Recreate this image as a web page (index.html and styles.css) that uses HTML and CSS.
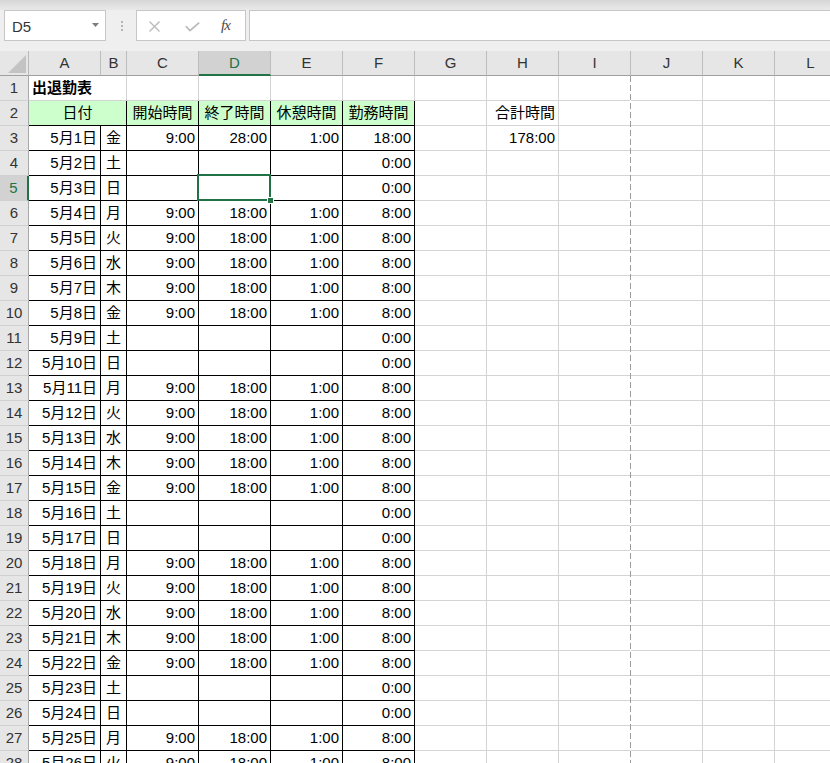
FILE: index.html
```html
<!DOCTYPE html>
<html lang="ja">
<head>
<meta charset="utf-8">
<title>出退勤表</title>
<link rel="stylesheet" href="styles.css">
</head>
<body>
<div class="app">
  <div class="ribbon-shadow"></div>
  <div class="fbar">
    <div class="namebox">
      <span class="nb-text">D5</span>
      <svg class="nb-caret" width="7" height="4" viewBox="0 0 7 4"><polygon points="0,0 7,0 3.5,4" fill="#7d7d7d"/></svg>
    </div>
    <div class="fsep"><i></i><i></i><i></i></div>
    <div class="fbtns">
      <svg class="ic-x" width="11" height="11" viewBox="0 0 11 11"><path d="M0.5 0.5 L10.5 10.5 M10.5 0.5 L0.5 10.5" stroke="#b8b8b8" stroke-width="1.3" fill="none"/></svg>
      <svg class="ic-ok" width="15" height="10" viewBox="0 0 15 10"><path d="M0.8 4.2 L5 8.6 L14.2 0.6" stroke="#b8b8b8" stroke-width="1.6" fill="none"/></svg>
      <span class="ic-fx">fx</span>
    </div>
    <div class="finput"></div>
  </div>
  <div class="sheet">
    <div class="grid">
      <div class="corner"><svg width="18" height="18" viewBox="0 0 18 18"><polygon points="18,0 18,18 0,18" fill="#c3c3c3"/></svg></div>
      <div class="ch">A</div><div class="ch">B</div><div class="ch">C</div><div class="ch sel">D</div><div class="ch">E</div><div class="ch">F</div><div class="ch">G</div><div class="ch">H</div><div class="ch">I</div><div class="ch">J</div><div class="ch">K</div><div class="ch">L</div>

      <div class="rh">1</div><div class="g span2 bold">出退勤表</div><div class="g"></div><div class="g"></div><div class="g"></div><div class="g"></div><div class="g"></div><div class="g"></div><div class="g"></div><div class="g"></div><div class="g"></div><div class="g"></div>

      <div class="rh">2</div><div class="hd span2">日付</div><div class="hd">開始時間</div><div class="hd">終了時間</div><div class="hd">休憩時間</div><div class="hd">勤務時間</div><div class="g"></div><div class="g r">合計時間</div><div class="g"></div><div class="g"></div><div class="g"></div><div class="g"></div>

      <div class="rh">3</div><div class="t r">5月1日</div><div class="t c">金</div><div class="t r">9:00</div><div class="t r">28:00</div><div class="t r">1:00</div><div class="t r">18:00</div><div class="g"></div><div class="g r">178:00</div><div class="g"></div><div class="g"></div><div class="g"></div><div class="g"></div>

      <div class="rh">4</div><div class="t r">5月2日</div><div class="t c">土</div><div class="t"></div><div class="t"></div><div class="t"></div><div class="t r">0:00</div><div class="g"></div><div class="g"></div><div class="g"></div><div class="g"></div><div class="g"></div><div class="g"></div>

      <div class="rh sel">5</div><div class="t r">5月3日</div><div class="t c">日</div><div class="t"></div><div class="t"></div><div class="t"></div><div class="t r">0:00</div><div class="g"></div><div class="g"></div><div class="g"></div><div class="g"></div><div class="g"></div><div class="g"></div>

      <div class="rh">6</div><div class="t r">5月4日</div><div class="t c">月</div><div class="t r">9:00</div><div class="t r">18:00</div><div class="t r">1:00</div><div class="t r">8:00</div><div class="g"></div><div class="g"></div><div class="g"></div><div class="g"></div><div class="g"></div><div class="g"></div>

      <div class="rh">7</div><div class="t r">5月5日</div><div class="t c">火</div><div class="t r">9:00</div><div class="t r">18:00</div><div class="t r">1:00</div><div class="t r">8:00</div><div class="g"></div><div class="g"></div><div class="g"></div><div class="g"></div><div class="g"></div><div class="g"></div>

      <div class="rh">8</div><div class="t r">5月6日</div><div class="t c">水</div><div class="t r">9:00</div><div class="t r">18:00</div><div class="t r">1:00</div><div class="t r">8:00</div><div class="g"></div><div class="g"></div><div class="g"></div><div class="g"></div><div class="g"></div><div class="g"></div>

      <div class="rh">9</div><div class="t r">5月7日</div><div class="t c">木</div><div class="t r">9:00</div><div class="t r">18:00</div><div class="t r">1:00</div><div class="t r">8:00</div><div class="g"></div><div class="g"></div><div class="g"></div><div class="g"></div><div class="g"></div><div class="g"></div>

      <div class="rh">10</div><div class="t r">5月8日</div><div class="t c">金</div><div class="t r">9:00</div><div class="t r">18:00</div><div class="t r">1:00</div><div class="t r">8:00</div><div class="g"></div><div class="g"></div><div class="g"></div><div class="g"></div><div class="g"></div><div class="g"></div>

      <div class="rh">11</div><div class="t r">5月9日</div><div class="t c">土</div><div class="t"></div><div class="t"></div><div class="t"></div><div class="t r">0:00</div><div class="g"></div><div class="g"></div><div class="g"></div><div class="g"></div><div class="g"></div><div class="g"></div>

      <div class="rh">12</div><div class="t r">5月10日</div><div class="t c">日</div><div class="t"></div><div class="t"></div><div class="t"></div><div class="t r">0:00</div><div class="g"></div><div class="g"></div><div class="g"></div><div class="g"></div><div class="g"></div><div class="g"></div>

      <div class="rh">13</div><div class="t r">5月11日</div><div class="t c">月</div><div class="t r">9:00</div><div class="t r">18:00</div><div class="t r">1:00</div><div class="t r">8:00</div><div class="g"></div><div class="g"></div><div class="g"></div><div class="g"></div><div class="g"></div><div class="g"></div>

      <div class="rh">14</div><div class="t r">5月12日</div><div class="t c">火</div><div class="t r">9:00</div><div class="t r">18:00</div><div class="t r">1:00</div><div class="t r">8:00</div><div class="g"></div><div class="g"></div><div class="g"></div><div class="g"></div><div class="g"></div><div class="g"></div>

      <div class="rh">15</div><div class="t r">5月13日</div><div class="t c">水</div><div class="t r">9:00</div><div class="t r">18:00</div><div class="t r">1:00</div><div class="t r">8:00</div><div class="g"></div><div class="g"></div><div class="g"></div><div class="g"></div><div class="g"></div><div class="g"></div>

      <div class="rh">16</div><div class="t r">5月14日</div><div class="t c">木</div><div class="t r">9:00</div><div class="t r">18:00</div><div class="t r">1:00</div><div class="t r">8:00</div><div class="g"></div><div class="g"></div><div class="g"></div><div class="g"></div><div class="g"></div><div class="g"></div>

      <div class="rh">17</div><div class="t r">5月15日</div><div class="t c">金</div><div class="t r">9:00</div><div class="t r">18:00</div><div class="t r">1:00</div><div class="t r">8:00</div><div class="g"></div><div class="g"></div><div class="g"></div><div class="g"></div><div class="g"></div><div class="g"></div>

      <div class="rh">18</div><div class="t r">5月16日</div><div class="t c">土</div><div class="t"></div><div class="t"></div><div class="t"></div><div class="t r">0:00</div><div class="g"></div><div class="g"></div><div class="g"></div><div class="g"></div><div class="g"></div><div class="g"></div>

      <div class="rh">19</div><div class="t r">5月17日</div><div class="t c">日</div><div class="t"></div><div class="t"></div><div class="t"></div><div class="t r">0:00</div><div class="g"></div><div class="g"></div><div class="g"></div><div class="g"></div><div class="g"></div><div class="g"></div>

      <div class="rh">20</div><div class="t r">5月18日</div><div class="t c">月</div><div class="t r">9:00</div><div class="t r">18:00</div><div class="t r">1:00</div><div class="t r">8:00</div><div class="g"></div><div class="g"></div><div class="g"></div><div class="g"></div><div class="g"></div><div class="g"></div>

      <div class="rh">21</div><div class="t r">5月19日</div><div class="t c">火</div><div class="t r">9:00</div><div class="t r">18:00</div><div class="t r">1:00</div><div class="t r">8:00</div><div class="g"></div><div class="g"></div><div class="g"></div><div class="g"></div><div class="g"></div><div class="g"></div>

      <div class="rh">22</div><div class="t r">5月20日</div><div class="t c">水</div><div class="t r">9:00</div><div class="t r">18:00</div><div class="t r">1:00</div><div class="t r">8:00</div><div class="g"></div><div class="g"></div><div class="g"></div><div class="g"></div><div class="g"></div><div class="g"></div>

      <div class="rh">23</div><div class="t r">5月21日</div><div class="t c">木</div><div class="t r">9:00</div><div class="t r">18:00</div><div class="t r">1:00</div><div class="t r">8:00</div><div class="g"></div><div class="g"></div><div class="g"></div><div class="g"></div><div class="g"></div><div class="g"></div>

      <div class="rh">24</div><div class="t r">5月22日</div><div class="t c">金</div><div class="t r">9:00</div><div class="t r">18:00</div><div class="t r">1:00</div><div class="t r">8:00</div><div class="g"></div><div class="g"></div><div class="g"></div><div class="g"></div><div class="g"></div><div class="g"></div>

      <div class="rh">25</div><div class="t r">5月23日</div><div class="t c">土</div><div class="t"></div><div class="t"></div><div class="t"></div><div class="t r">0:00</div><div class="g"></div><div class="g"></div><div class="g"></div><div class="g"></div><div class="g"></div><div class="g"></div>

      <div class="rh">26</div><div class="t r">5月24日</div><div class="t c">日</div><div class="t"></div><div class="t"></div><div class="t"></div><div class="t r">0:00</div><div class="g"></div><div class="g"></div><div class="g"></div><div class="g"></div><div class="g"></div><div class="g"></div>

      <div class="rh">27</div><div class="t r">5月25日</div><div class="t c">月</div><div class="t r">9:00</div><div class="t r">18:00</div><div class="t r">1:00</div><div class="t r">8:00</div><div class="g"></div><div class="g"></div><div class="g"></div><div class="g"></div><div class="g"></div><div class="g"></div>

      <div class="rh">28</div><div class="t r">5月26日</div><div class="t c">火</div><div class="t r">9:00</div><div class="t r">18:00</div><div class="t r">1:00</div><div class="t r">8:00</div><div class="g"></div><div class="g"></div><div class="g"></div><div class="g"></div><div class="g"></div><div class="g"></div>
    </div>
    <div class="pagebreak"></div>
    <div class="selection"><div class="handle"></div></div>
  </div>
</div>
</body>
</html>
```

FILE: styles.css
```css
html, body {
  margin: 0;
  padding: 0;
  background: #ffffff;
}
body {
  width: 830px;
  height: 763px;
  overflow: hidden;
  font-family: "Liberation Sans", "Noto Sans CJK JP", sans-serif;
  font-size: 15px;
  color: #000;
}
.app {
  width: 830px;
  height: 763px;
  overflow: hidden;
}
.ribbon-shadow {
  height: 10px;
  background: linear-gradient(#d6d6d6, #e9e9e9);
}
.fbar {
  display: flex;
  height: 31px;
  padding-bottom: 10px;
  background: #efefef;
}
.namebox {
  box-sizing: border-box;
  margin-left: 4px;
  width: 102px;
  height: 31px;
  border: 1px solid #c6c6c6;
  background: #fff;
  display: flex;
  align-items: center;
  justify-content: space-between;
  padding: 0 6px 0 7px;
}
.nb-text {
  color: #333;
  font-size: 15px;
  line-height: 29px;
  padding-top: 1px;
}
.nb-caret {
  display: block;
  margin-top: -2px;
}
.fsep {
  width: 30px;
  display: flex;
  flex-direction: column;
  align-items: center;
  justify-content: center;
  gap: 2px;
  padding-left: 1px;
  box-sizing: border-box;
}
.fsep i {
  display: block;
  width: 2px;
  height: 2px;
  background: #b4b4b4;
}
.fbtns {
  box-sizing: border-box;
  width: 110px;
  height: 31px;
  border: 1px solid #c6c6c6;
  background: #fff;
  display: flex;
  align-items: center;
  padding-left: 12px;
}
.ic-x {
  display: block;
  margin-top: 1px;
}
.ic-ok {
  display: block;
  margin-left: 25px;
  margin-top: 2px;
}
.ic-fx {
  margin-left: 21px;
  font-family: "Liberation Serif", serif;
  font-style: italic;
  font-size: 15px;
  color: #4a4a4a;
  letter-spacing: -1px;
  line-height: 29px;
}
.finput {
  box-sizing: border-box;
  margin-left: 3px;
  flex: 1;
  height: 31px;
  border: 1px solid #c6c6c6;
  border-right: none;
  background: #fff;
}
.sheet {
  position: relative;
}
.grid {
  display: grid;
  grid-template-columns: 29px 72px 26px repeat(10, 72px);
  grid-auto-rows: 25px;
  width: 847px;
}
.corner, .ch, .rh, .g, .t, .hd {
  box-sizing: border-box;
  border-right: 1px solid #d4d4d4;
  border-bottom: 1px solid #d4d4d4;
  line-height: 24px;
  padding: 0 3px;
  white-space: nowrap;
  overflow: hidden;
}
.corner {
  background: #e6e6e6;
  border-right-color: #b9b9b9;
  border-bottom-color: #a0a0a0;
  display: flex;
  align-items: flex-end;
  justify-content: flex-end;
  padding: 0 2px 2px 0;
}
.corner svg {
  display: block;
}
.ch {
  background: #e6e6e6;
  border-right-color: #bdbdbd;
  border-bottom-color: #9f9f9f;
  text-align: center;
  color: #333;
  padding: 0;
}
.ch.sel {
  background: #d2d2d2;
  color: #217346;
  border-bottom: 2px solid #217346;
  line-height: 24px;
}
.rh {
  background: #e6e6e6;
  border-right-color: #a8a8a8;
  border-bottom-color: #d0d0d0;
  text-align: center;
  color: #333;
  padding: 0;
}
.rh.sel {
  background: #d2d2d2;
  color: #217346;
  border-right: 2px solid #217346;
}
.span2 {
  grid-column: span 2;
}
.bold {
  font-weight: bold;
}
.t {
  border-right-color: #000;
  border-bottom-color: #000;
}
.hd {
  background: #ccffcc;
  border-right-color: #000;
  border-bottom-color: #000;
  text-align: center;
  padding: 0;
}
.r {
  text-align: right;
}
.c {
  text-align: center;
  padding: 0;
}
.pagebreak {
  position: absolute;
  left: 630px;
  top: 25px;
  bottom: 0;
  width: 1px;
  background: repeating-linear-gradient(to bottom, #9c9c9c 0, #9c9c9c 6px, #ffffff 6px, #ffffff 9px);
}
.selection {
  position: absolute;
  left: 197px;
  top: 123px;
  width: 74px;
  height: 27px;
  box-sizing: border-box;
  border: 2px solid #217346;
}
.handle {
  position: absolute;
  left: 68px;
  top: 21px;
  width: 5px;
  height: 5px;
  background: #217346;
  border: 1px solid #ffffff;
}
```
